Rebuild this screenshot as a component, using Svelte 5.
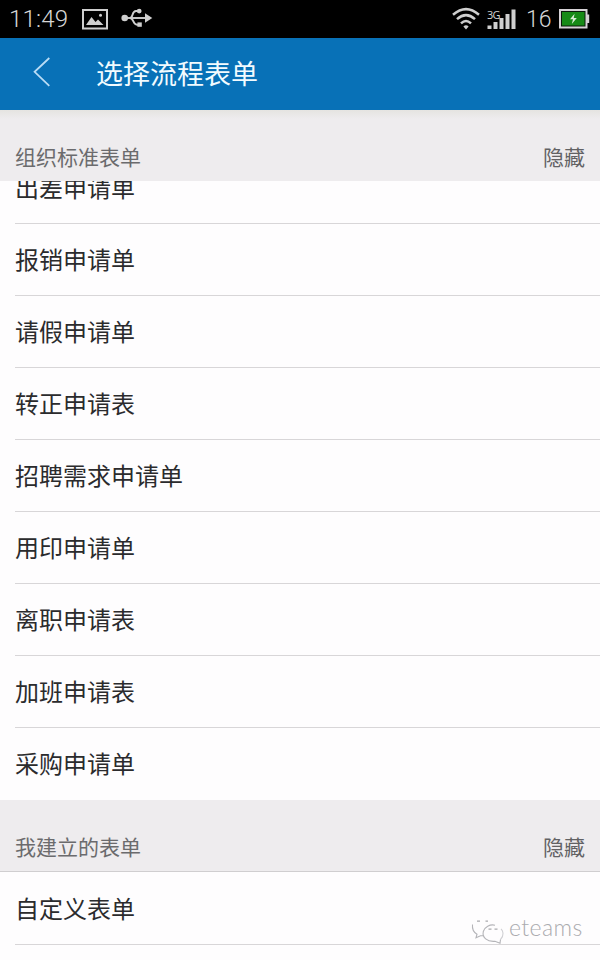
<script>
  const standardForms = [
    '出差申请单',
    '报销申请单',
    '请假申请单',
    '转正申请表',
    '招聘需求申请单',
    '用印申请单',
    '离职申请表',
    '加班申请表',
    '采购申请单'
  ];
  const ownForms = ['自定义表单'];
</script>

<div class="screen">
  <div class="status">
    <span class="time">11:49</span>
    <svg class="picture" width="26" height="21" viewBox="0 0 26 21">
      <rect x="1" y="1" width="24" height="18.5" fill="none" stroke="#cfcfcf" stroke-width="2" />
      <path d="M4 16 L9.5 8 L13.5 13 L16 10.5 L21.5 16 Z" fill="#cfcfcf" />
      <circle cx="18.5" cy="6.2" r="1.5" fill="#cfcfcf" />
    </svg>
    <svg class="usb" width="32" height="20" viewBox="0 0 32 20">
      <g fill="none" stroke="#cfcfcf" stroke-width="1.9">
        <path d="M3 10 H26" />
        <path d="M9 10 C12.5 10 10.5 3 15 3 H18" />
        <path d="M9 10 C13 10 11.5 16.7 16 16.7 H19" />
      </g>
      <g fill="#cfcfcf">
        <circle cx="3.7" cy="10" r="3.3" />
        <circle cx="18.2" cy="3.1" r="2.4" />
        <rect x="16.4" y="14.4" width="4.4" height="4.4" />
        <path d="M24 5.2 L31.3 10 L24 14.8 Z" />
      </g>
    </svg>
    <span class="spacer"></span>
    <svg class="wifi" width="28" height="23" viewBox="0 0 28 23">
      <g fill="none" stroke="#cfcfcf" stroke-width="2.5">
        <path d="M1 7.8 Q14 -3.6 27 7.8" />
        <path d="M5 12.2 Q14 4 23 12.2" />
        <path d="M9 16.4 Q14 11.6 19 16.4" />
      </g>
      <path d="M11.4 19.4 Q14 17 16.6 19.4 L14 22.4 Z" fill="#cfcfcf" />
    </svg>
    <div class="signal">
      <span class="net">3G</span>
      <svg width="30" height="21" viewBox="0 0 30 21" fill="#cfcfcf">
        <rect x="0.5" y="16.5" width="4" height="3.5" />
        <rect x="6.5" y="13" width="4" height="7" />
        <rect x="12.5" y="9" width="4" height="11" />
        <rect x="18.5" y="5" width="4" height="15" />
        <rect x="24.5" y="0.5" width="4" height="19.5" />
      </svg>
    </div>
    <span class="level">16</span>
    <svg class="battery" width="31" height="20" viewBox="0 0 31 20">
      <rect x="1" y="1" width="26.5" height="17.5" fill="#0b1a0b" stroke="#d6d2d6" stroke-width="2" />
      <rect x="3" y="3" width="22.5" height="13.5" fill="#168a16" />
      <rect x="28" y="5.5" width="2.2" height="8.5" fill="#d6d2d6" />
      <path d="M15.6 4.8 L11 10.3 H14 L12.8 15 L17.8 9 H14.7 Z" fill="#d9ecd6" />
    </svg>
  </div>

  <header>
    <svg width="18" height="32" viewBox="0 0 18 32">
      <path d="M16.3 1 L1.6 14.8 L16.3 28.8" fill="none" stroke="#b9dcf5" stroke-width="1.8" />
    </svg>
    <h1>选择流程表单</h1>
  </header>

  <div class="section first">
    <span>组织标准表单</span>
    <span class="toggle">隐藏</span>
  </div>
  <div class="window">
    <ul class="scrolled">
      {#each standardForms as form}
        <li><span>{form}</span></li>
      {/each}
    </ul>
  </div>

  <div class="section second">
    <span>我建立的表单</span>
    <span class="toggle">隐藏</span>
  </div>
  <ul class="own">
    {#each ownForms as form}
      <li><span>{form}</span></li>
    {/each}
  </ul>

  <div class="watermark">
    <svg width="34" height="26" viewBox="0 0 34 26">
      <g fill="none" stroke="#b4b4b8" stroke-width="1.1">
        <path d="M1.5 5.5 C1 10 3 13.5 6 15.2 L5 18.7 L9.5 16.7 H12" />
        <path d="M29.5 20.5 C33.5 16.5 32 11.5 30 10" stroke="#d0d0d4" />
        <path d="M24 6.2 C19 5 13.5 8 12.3 12.5 C11 18.5 16 23 24 22.3 L29 24.3 L29.5 20.5" />
      </g>
      <g fill="none" stroke="#a9a9ad" stroke-width="1.3">
        <path d="M6 2.2 H9 M14.5 2.2 H17 M17.5 10.2 H20.5 M23.5 10.2 H26.5" />
      </g>
    </svg>
    <span>eteams</span>
  </div>
</div>

<style>
  :global(body) {
    margin: 0;
    background: #fefdfe;
  }
  .screen {
    position: relative;
    width: 600px;
    height: 960px;
    overflow: hidden;
    background: #fefdfe;
    font-family: 'Noto Sans CJK SC', sans-serif;
    color: #2b2b2d;
  }
  .status {
    display: flex;
    align-items: center;
    box-sizing: border-box;
    height: 38px;
    padding: 0 10px 0 9px;
    background: #000;
    color: #d6d6d6;
    font-family: Roboto, sans-serif;
    font-size: 24px;
    font-weight: 300;
    line-height: 38px;
  }
  .time {
    width: 73px;
    white-space: nowrap;
    letter-spacing: 0.2px;
  }
  .usb {
    margin-left: 13px;
    margin-bottom: 2px;
  }
  .spacer {
    flex: 1;
  }
  .wifi {
    margin-right: 7px;
    margin-bottom: 2px;
  }
  .signal {
    position: relative;
    display: flex;
    width: 30px;
    margin-right: 9px;
  }
  .net {
    position: absolute;
    left: 0;
    top: 0;
    font-family: 'Open Sans', sans-serif;
    font-size: 11px;
    letter-spacing: -0.8px;
    line-height: 11px;
    font-weight: 400;
  }
  .level {
    width: 33px;
    font-size: 23px;
    line-height: 39px;
  }
  header {
    display: flex;
    align-items: center;
    height: 72px;
    padding-left: 33px;
    background: #0871b7;
  }
  header svg {
    margin-bottom: 2px;
  }
  h1 {
    margin: 0 0 0 45px;
    color: #f2fbff;
    font-size: 27px;
    font-weight: 400;
    line-height: 70px;
    padding-bottom: 2px;
  }
  .section {
    display: flex;
    justify-content: space-between;
    box-sizing: border-box;
    padding: 23px 15px 0;
    background: #eeecee;
    color: #6b6b6d;
    font-size: 21px;
    line-height: 46px;
  }
  .first {
    height: 71px;
    background: linear-gradient(#e5e4e1, #eeecee 9px);
  }
  .second {
    height: 72px;
    border-bottom: 1px solid #d0ced0;
  }
  .toggle {
    color: #626264;
  }
  .window {
    height: 619px;
    overflow: hidden;
  }
  ul {
    margin: 0;
    padding: 0 0 0 15px;
    list-style: none;
  }
  .scrolled {
    margin-top: -29px;
  }
  li {
    box-sizing: border-box;
    height: 72px;
    border-bottom: 1px solid #d8d6d8;
    font-size: 24px;
    line-height: 69px;
  }
  .scrolled li:last-child {
    border-bottom: 0;
  }
  .own li {
    height: 73px;
    line-height: 71px;
  }
  .watermark {
    position: absolute;
    left: 471px;
    top: 913px;
    display: flex;
    align-items: flex-start;
    color: #ababaf;
  }
  .watermark svg {
    margin-top: 6px;
  }
  .watermark span {
    margin-left: 4px;
    font-family: Lato, sans-serif;
    font-size: 23px;
    font-weight: 300;
    letter-spacing: 0.4px;
    line-height: 28px;
  }
</style>
